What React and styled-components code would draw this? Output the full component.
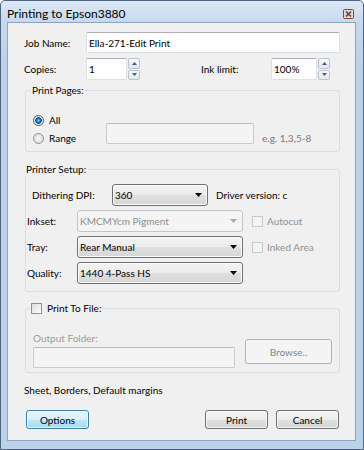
import React from 'react';
import styled, { createGlobalStyle } from 'styled-components';

const GlobalStyle = createGlobalStyle`
  html, body {
    margin: 0;
    padding: 0;
    background: #ffffff;
  }
  body {
    font-family: Lato, "Noto Sans", sans-serif;
    font-size: 10px;
    color: #000;
  }
  * { box-sizing: border-box; }
`;

const Frame = styled.div`
  width: 364px;
  height: 450px;
  border: 1px solid #4f6580;
  border-radius: 5px 5px 0 0;
  background: linear-gradient(#dde8f5 0px, #c6d9ee 21px, #bcd2ea 60px, #bcd2ea);
  display: flex;
  flex-direction: column;
  padding: 0 7px 8px 6px;
`;

const TitleBar = styled.div`
  height: 21px;
  display: flex;
  align-items: flex-start;
  justify-content: space-between;
  padding-top: 6px;
`;

const Title = styled.div`
  font-size: 12px;
  line-height: 14px;
  color: #000;
`;

const CloseBox = styled.svg`
  margin-top: 2px;
  margin-right: 2px;
`;

const Client = styled.div`
  flex: 1;
  background: #f0f0f0;
  border: 1px solid #8ea4bd;
  padding: 9px 15px 0 16px;
  display: flex;
  flex-direction: column;
`;

const Row = styled.div`
  display: flex;
  align-items: center;
  height: ${p => p.$h || 22}px;
  margin-top: ${p => p.$mt || 0}px;
`;

const Label = styled.div`
  width: ${p => (p.$w ? `${p.$w}px` : 'auto')};
  margin-left: ${p => p.$ml || 0}px;
  margin-top: ${p => p.$mt || 0}px;
  line-height: 14px;
  color: ${p => (p.$disabled ? '#9a9a9a' : '#000')};
  white-space: nowrap;
`;

const TextBox = styled.div`
  width: ${p => (p.$w ? `${p.$w}px` : 'auto')};
  flex: ${p => (p.$w ? 'none' : 1)};
  height: ${p => p.$h || 22}px;
  border: 1px solid ${p => (p.$disabled ? '#c9cbcf' : '#dbdfe6')};
  border-top-color: ${p => (p.$disabled ? '#b8babe' : '#abadb3')};
  border-radius: 2px;
  background: ${p => (p.$disabled ? '#f4f4f4' : '#ffffff')};
  padding: 0 2px;
  display: flex;
  align-items: center;
  line-height: 14px;
  margin-top: ${p => p.$mt || 0}px;
  align-self: ${p => p.$self || 'auto'};
`;

const Spin = styled.div`
  width: 12px;
  height: 22px;
  margin-left: 1px;
  display: flex;
  flex-direction: column;
  gap: 1px;
`;

const SpinHalf = styled.div`
  flex: 1;
  border: 1px solid #bdc4cd;
  border-radius: 2px;
  background: linear-gradient(#f6f8fa, #e3e8ee);
  display: flex;
  align-items: center;
  justify-content: center;
`;

const Group = styled.fieldset`
  margin: ${p => p.$mt || 0}px 0 0 1px;
  border: 1px solid #d5dfe5;
  border-radius: 3px;
  padding: ${p => p.$pt || 0}px 0 ${p => p.$pb || 0}px ${p => p.$pl || 0}px;
  min-width: 0;
`;

const Legend = styled.legend`
  margin-left: -3px;
  padding: 0 2px 0 ${p => p.$pl ?? 2}px;
  line-height: 14px;
  display: flex;
  align-items: center;
  gap: 5px;
`;

const RadioRow = styled.div`
  display: flex;
  align-items: center;
  height: 18px;
`;

const RadioDot = styled.span`
  width: 11px;
  height: 11px;
  border-radius: 50%;
  border: 1px solid ${p => (p.$checked ? '#2c628b' : '#8e8f8f')};
  background: ${p =>
    p.$checked
      ? 'radial-gradient(circle, #8fd3f8 0, #1d6fb0 2px, #0f4f86 3px, #d8e6f0 3.5px, #f4f4f4 5px)'
      : 'radial-gradient(circle, #f8f8f8 0, #e0e0e0 4px, #f4f4f4 5px)'};
  flex: none;
`;

const RadioText = styled.span`
  margin-left: 5px;
  width: 57px;
  line-height: 14px;
`;

const Combo = styled.div`
  width: ${p => p.$w}px;
  height: 22px;
  border: 1px solid ${p => (p.$disabled ? '#c2c5c9' : '#707070')};
  border-radius: 3px;
  background: ${p =>
    p.$disabled
      ? '#f4f4f4'
      : 'linear-gradient(#f3f3f3 0%, #ebebeb 50%, #e0e0e0 51%, #d6d6d6 100%)'};
  box-shadow: ${p => (p.$disabled ? 'none' : 'inset 0 0 0 1px #fbfbfb')};
  color: ${p => (p.$disabled ? '#8d8d8d' : '#000')};
  display: flex;
  align-items: center;
  justify-content: space-between;
  padding: 0 5px 0 2px;
  line-height: 14px;
`;

const Check = styled.span`
  width: 11px;
  height: 11px;
  border: 1px solid ${p => (p.$disabled ? '#c8c8c8' : '#8e8f8f')};
  background: ${p =>
    p.$disabled ? '#f4f4f4' : 'linear-gradient(135deg, #dcdcdc, #fdfdfd)'};
  flex: none;
  margin-left: ${p => p.$ml || 0}px;
`;

const Note = styled.span`
  color: ${p => p.$c || '#8a8a8a'};
  line-height: 14px;
  margin-left: ${p => p.$ml || 0}px;
  white-space: nowrap;
`;

const FolderRow = styled.div`
  display: flex;
  align-items: flex-end;
`;

const FolderCol = styled.div`
  display: flex;
  flex-direction: column;
  gap: 2px;
  width: 202px;
`;

const Button = styled.div`
  width: ${p => p.$w || 63}px;
  height: ${p => p.$h || 19}px;
  border: 1px solid ${p => (p.$primary ? '#3c7fb1' : p.$disabled ? '#adb2b5' : '#707070')};
  border-radius: 3px;
  background: ${p =>
    p.$primary
      ? 'linear-gradient(#e8f5fc 0%, #d8eefb 50%, #bee4f8 51%, #a9daf4 100%)'
      : p.$disabled
      ? '#f4f4f4'
      : 'linear-gradient(#f4f4f4 0%, #ececec 50%, #e0e0e0 51%, #d4d4d4 100%)'};
  box-shadow: ${p => (p.$disabled ? 'none' : 'inset 0 0 0 1px rgba(255,255,255,0.7)')};
  color: ${p => (p.$disabled ? '#858585' : '#000')};
  display: flex;
  align-items: center;
  justify-content: center;
  line-height: 14px;
  margin-left: ${p => p.$ml || 0}px;
  margin-bottom: ${p => p.$mb || 0}px;
`;

const Footer = styled.div`
  display: flex;
  align-items: center;
  margin-top: 13px;
  padding: 0 1px 0 2px;
`;

const Spacer = styled.div`
  flex: 1;
`;

const Arrow = ({ color = '#000' }) => (
  <svg width="7" height="4" viewBox="0 0 7 4">
    <path d="M0 0h7L3.5 4z" fill={color} />
  </svg>
);

const SpinArrow = ({ up }) => (
  <svg width="5" height="3" viewBox="0 0 5 3">
    <path d={up ? 'M0 3h5L2.5 0z' : 'M0 0h5L2.5 3z'} fill="#3e5f8a" />
  </svg>
);

function Spinner() {
  return (
    <Spin>
      <SpinHalf><SpinArrow up /></SpinHalf>
      <SpinHalf><SpinArrow /></SpinHalf>
    </Spin>
  );
}

function Dropdown({ w, value, disabled }) {
  return (
    <Combo $w={w} $disabled={disabled}>
      <span>{value}</span>
      <Arrow color={disabled ? '#a8a8a8' : '#000'} />
    </Combo>
  );
}

export default function App() {
  return (
    <>
      <GlobalStyle />
      <Frame>
        <TitleBar>
          <Title>Printing to Epson3880</Title>
          <CloseBox width="11" height="10" viewBox="0 0 11 10">
            <rect x="0.5" y="0.5" width="10" height="9" rx="1" fill="#ecd3cc" stroke="#9a3d2d" />
            <path d="M3 2.5l5 5M8 2.5l-5 5" stroke="#4a4a4a" strokeWidth="1.6" />
          </CloseBox>
        </TitleBar>
        <Client>
          <Row $h={21}>
            <Label $w={62}>Job Name:</Label>
            <TextBox $h={21}>Ella-271-Edit Print</TextBox>
          </Row>
          <Row $mt={5}>
            <Label $w={62}>Copies:</Label>
            <TextBox $w={41}>1</TextBox>
            <Spinner />
            <Label $w={70} $ml={61}>Ink limit:</Label>
            <TextBox $w={46}>100%</TextBox>
            <Spinner />
          </Row>

          <Group $mt={3} $pl={7} $pt={14} $pb={4}>
            <Legend>Print Pages:</Legend>
            <RadioRow>
              <RadioDot $checked />
              <RadioText>All</RadioText>
            </RadioRow>
            <RadioRow>
              <RadioDot />
              <RadioText>Range</RadioText>
              <TextBox $w={148} $h={21} $disabled $self="flex-start" $mt={-6} />
              <Note $ml={8} $c="#7a7a7a">e.g. 1,3,5-8</Note>
            </RadioRow>
          </Group>

          <Group $mt={10} $pl={1} $pt={8} $pb={7}>
            <Legend>Printer Setup:</Legend>
            <Row>
              <Label $w={80} $ml={5}>Dithering DPI:</Label>
              <Dropdown w={96} value="360" />
              <Label $ml={8}>Driver version: c</Label>
            </Row>
            <Row $mt={4}>
              <Label $w={50}>Inkset:</Label>
              <Dropdown w={166} value="KMCMYcm Pigment" disabled />
              <Check $disabled $ml={9} />
              <Note $ml={4} $c="#909090">Autocut</Note>
            </Row>
            <Row $mt={4}>
              <Label $w={50}>Tray:</Label>
              <Dropdown w={166} value="Rear Manual" />
              <Check $disabled $ml={9} />
              <Note $ml={4} $c="#909090">Inked Area</Note>
            </Row>
            <Row $mt={4}>
              <Label $w={50}>Quality:</Label>
              <Dropdown w={166} value="1440 4-Pass HS" />
            </Row>
          </Group>

          <Group $mt={9} $pl={7} $pt={16} $pb={4}>
            <Legend $pl={1}>
              <Check />
              <span>Print To File:</span>
            </Legend>
            <FolderRow>
              <FolderCol>
                <Label $disabled>Output Folder:</Label>
                <TextBox $w={202} $h={21} $disabled />
              </FolderCol>
              <Button $disabled $w={87} $h={25} $ml={10} $mb={4}>Browse..</Button>
            </FolderRow>
          </Group>

          <Label $mt={10}>Sheet, Borders, Default margins</Label>

          <Footer>
            <Button $primary>Options</Button>
            <Spacer />
            <Button>Print</Button>
            <Button $ml={8}>Cancel</Button>
          </Footer>
        </Client>
      </Frame>
    </>
  );
}
